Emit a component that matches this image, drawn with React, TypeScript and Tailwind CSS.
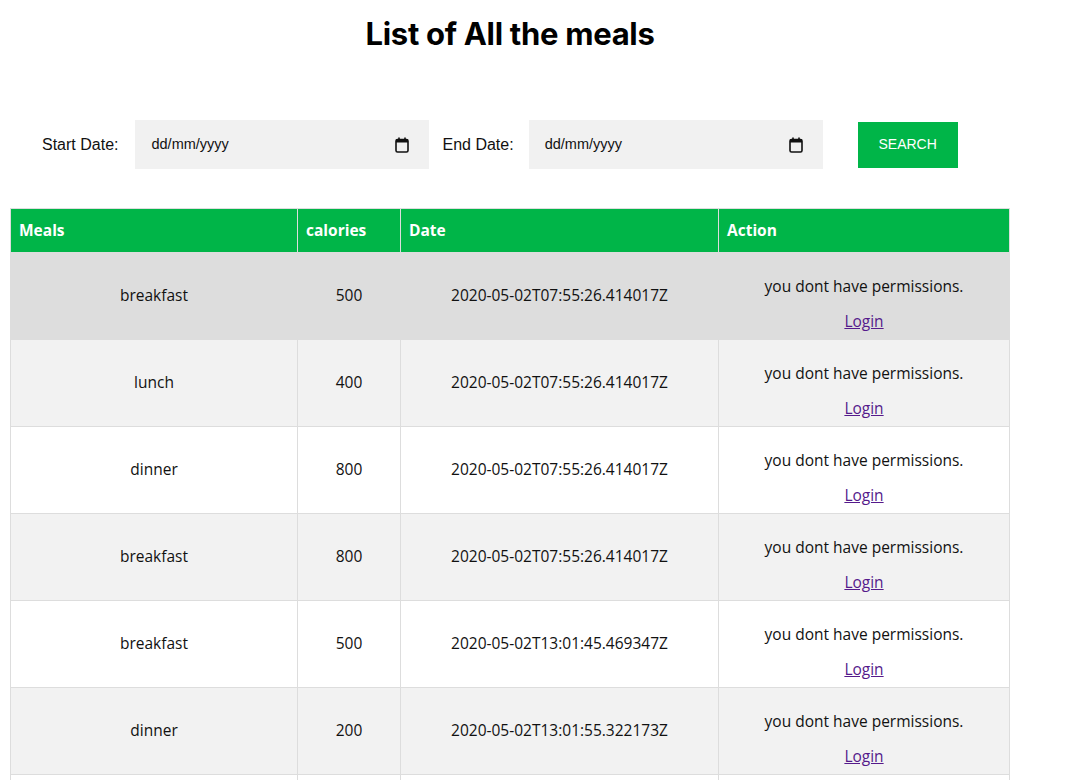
import React from "react"

type Meal = {
  name: string
  calories: number
  date: string
}

const meals: Meal[] = [
  { name: "breakfast", calories: 500, date: "2020-05-02T07:55:26.414017Z" },
  { name: "lunch", calories: 400, date: "2020-05-02T07:55:26.414017Z" },
  { name: "dinner", calories: 800, date: "2020-05-02T07:55:26.414017Z" },
  { name: "breakfast", calories: 800, date: "2020-05-02T07:55:26.414017Z" },
  { name: "breakfast", calories: 500, date: "2020-05-02T13:01:45.469347Z" },
  { name: "dinner", calories: 200, date: "2020-05-02T13:01:55.322173Z" },
  { name: "lunch", calories: 300, date: "2020-05-02T13:02:05.118263Z" },
]

function CalendarIcon() {
  return (
    <svg width="14" height="16" viewBox="0 0 14 16" fill="none" aria-hidden="true">
      <rect x="1" y="2.5" width="12" height="12.5" rx="1.5" stroke="#111" strokeWidth="1.6" />
      <rect x="1" y="2.5" width="12" height="3" fill="#111" />
      <rect x="3.2" y="0.5" width="1.6" height="3" fill="#111" />
      <rect x="9.2" y="0.5" width="1.6" height="3" fill="#111" />
    </svg>
  )
}

function DateField({ label, wide }: { label: string; wide?: boolean }) {
  return (
    <div className="flex items-center">
      <span className="text-[16px] text-[#111]">{label}</span>
      <div
        className={`${wide ? "ml-[17px]" : "ml-[15px]"} flex h-[49px] w-[294px] items-center justify-between bg-[#f1f1f1] pl-[16px] pr-[20px] text-[14.5px] text-[#111]`}
      >
        <span>dd/mm/yyyy</span>
        <CalendarIcon />
      </div>
    </div>
  )
}

export default function App() {
  return (
    <div className="min-h-screen bg-white font-['Inter','Liberation_Sans',sans-serif] text-black">
      <div className="w-[1010px] pl-[10px]">
        <h1 className="pt-[14px] text-center text-[31px] font-bold leading-[40px] tracking-[-0.3px]">
          List of All the meals
        </h1>

        <div className="mt-[66px] flex items-center pl-[32px] font-['Liberation_Sans',Arial,sans-serif]">
          <DateField label="Start Date:" wide />
          <div className="ml-[13px]">
            <DateField label="End Date:" />
          </div>
          <button className="ml-[35px] h-[46px] w-[100px] bg-[#00b548] text-[14px] text-white">
            SEARCH
          </button>
        </div>

        <table className="mt-[39px] w-[1000px] border-collapse font-['Open_Sans','DejaVu_Sans',sans-serif] text-[15.5px] text-[#111]">
          <thead>
            <tr className="h-[44px] bg-[#00b548] text-left text-white">
              <th className="w-[287px] border border-[#ddd] px-[8px] font-bold">Meals</th>
              <th className="w-[103px] border border-[#ddd] px-[8px] font-bold">calories</th>
              <th className="w-[318px] border border-[#ddd] px-[8px] font-bold">Date</th>
              <th className="border border-[#ddd] px-[8px] font-bold">Action</th>
            </tr>
          </thead>
          <tbody>
            {meals.map((meal, i) => (
              <tr
                key={i}
                className={i === 0 ? "h-[87px] bg-[#dddddd]" : i % 2 === 1 ? "h-[87px] bg-[#f2f2f2]" : "h-[87px] bg-white"}
              >
                <td className="border border-[#ddd] px-[8px] text-center">{meal.name}</td>
                <td className="border border-[#ddd] px-[8px] text-center">{meal.calories}</td>
                <td className="border border-[#ddd] px-[8px] text-center">{meal.date}</td>
                <td className="border border-[#ddd] px-[8px] text-center">
                  <div className="flex flex-col items-center gap-[13px] pt-[14px]">
                    <span className="leading-[22px]">you dont have permissions.</span>
                    <a href="#" className="leading-[22px] text-[#551a8b] underline">
                      Login
                    </a>
                  </div>
                </td>
              </tr>
            ))}
          </tbody>
        </table>
      </div>
    </div>
  )
}
